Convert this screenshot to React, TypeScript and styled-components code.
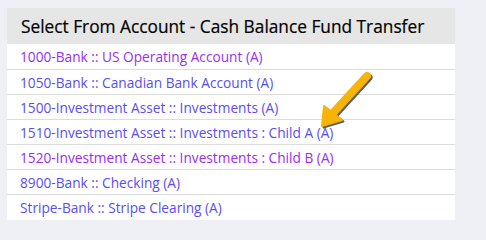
import React from "react";
import styled, { createGlobalStyle } from "styled-components";

const Global = createGlobalStyle`
  html, body { margin: 0; padding: 0; background: #eff0f5; }
  body { font-family: "Open Sans", "Noto Sans", sans-serif; }
`;

const Page = styled.div`
  padding: 8px 0 0 7px;
  width: 486px;
  height: 234px;
  box-sizing: border-box;
  position: relative;
`;

const Panel = styled.div`
  width: 448px;
  background: #ffffff;
  padding-bottom: 1px;
`;

const Header = styled.div`
  height: 36px;
  display: flex;
  align-items: center;
  padding-left: 14px;
  background: #e6e6e6;
  font-size: 17.3px;
  color: #000;
  -webkit-text-stroke: 0.2px #000;
`;

const Row = styled.div`
  height: 25px;
  box-sizing: border-box;
  display: flex;
  align-items: center;
  padding-left: 13px;
  & + & { border-top: 1px solid #dcdcdc; }
`;

const Link = styled.a<{ $visited?: boolean }>`
  font-size: 13.7px;
  text-decoration: none;
  color: ${(p) => (p.$visited ? "#9a2ef0" : "#5a4ef2")};
`;

const Arrow = styled.svg`
  position: absolute;
  left: 0;
  top: 0;
  pointer-events: none;
`;

const rows: { label: string; visited: boolean }[] = [
  { label: "1000-Bank :: US Operating Account (A)", visited: true },
  { label: "1050-Bank :: Canadian Bank Account (A)", visited: false },
  { label: "1500-Investment Asset :: Investments (A)", visited: false },
  { label: "1510-Investment Asset :: Investments : Child A (A)", visited: false },
  { label: "1520-Investment Asset :: Investments : Child B (A)", visited: true },
  { label: "8900-Bank :: Checking (A)", visited: false },
  { label: "Stripe-Bank :: Stripe Clearing (A)", visited: false },
];

export default function App() {
  return (
    <Page>
      <Global />
      <Panel>
        <Header>Select From Account - Cash Balance Fund Transfer</Header>
        {rows.map((r) => (
          <Row key={r.label}>
            <Link href="#" $visited={r.visited}>{r.label}</Link>
          </Row>
        ))}
      </Panel>
      <Arrow width="486" height="234" viewBox="0 0 486 234">
        <g transform="translate(1.5,1.5)" fill="#2a2a2a" stroke="#2a2a2a" opacity="0.75">
          <line x1="367" y1="76" x2="333" y2="113" strokeWidth="8" strokeLinecap="round" />
          <polygon points="322,126 324,106 342,120" strokeWidth="2" strokeLinejoin="round" />
        </g>
        <g fill="#f6b30a" stroke="#f6b30a">
          <line x1="367" y1="76" x2="333" y2="113" strokeWidth="8" strokeLinecap="round" />
          <polygon points="322,126 324,106 342,120" strokeWidth="2" strokeLinejoin="round" />
        </g>
      </Arrow>
    </Page>
  );
}
